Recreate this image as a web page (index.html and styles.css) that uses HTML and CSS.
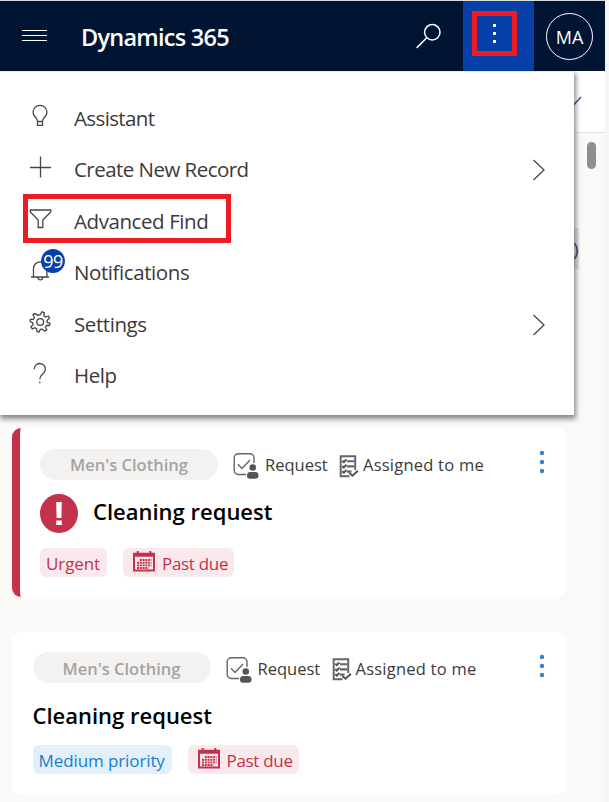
FILE: index.html
```html
<!DOCTYPE html>
<html lang="en">
<head>
<meta charset="utf-8">
<title>Dynamics 365</title>
<link rel="stylesheet" href="styles.css">
</head>
<body>
<svg width="0" height="0" class="defs">
  <symbol id="request" viewBox="0 0 26 26">
    <path d="M13 21.500H5.200A4 4 0 0 1 1.200 17.500V4.700A4 4 0 0 1 5.200.700H17A4 4 0 0 1 21 4.700V10" fill="none" stroke="#666" stroke-width="1.400"/>
    <path d="M5 11.300l4 4.200 8-8.500" fill="none" stroke="#666" stroke-width="1.400"/>
    <circle cx="19.800" cy="14.500" r="3.300" fill="#555"/>
    <rect x="14" y="19" width="11.500" height="6.700" rx="3.300" fill="#555"/>
  </symbol>
  <symbol id="assigned" viewBox="0 0 20 23">
    <path d="M10.500 21.300H1.700V1.200H16.200V15" fill="none" stroke="#666" stroke-width="2"/>
    <path d="M8 6.200h7M8 11.400h7M8 16.600h4.500" stroke="#666" stroke-width="2.100"/>
    <path d="M3.300 5.700l1.500 1.500 2.700-2.700M3.300 11l1.500 1.500 2.700-2.700M3.300 16.200l1.500 1.500 2.700-2.700M10.300 18l3.200 2.700 5.400-5" fill="none" stroke="#555" stroke-width="2"/>
  </symbol>
  <symbol id="calendar" viewBox="0 0 22 21">
    <path d="M1 2.800H21V19.500H1ZM1 4.700H21M4.700 0V5M17.300 0V5" fill="none" stroke="#c4314b" stroke-width="2"/>
    <path d="M6.800 9H18.500M4 11.700H18.500M4 14.400H18.500M4 17H15.500" stroke="#c4314b" stroke-width="1.900" stroke-dasharray="2 .8"/>
  </symbol>
  <symbol id="dots" viewBox="0 0 6 24">
    <g fill="#3b7fc4"><circle cx="3" cy="3" r="2.200"/><circle cx="3" cy="12" r="2.200"/><circle cx="3" cy="21" r="2.200"/></g>
  </symbol>
</svg>
<div class="app">
  <header class="topbar">
    <svg class="burger" width="25" height="12" viewBox="0 0 25 12"><path d="M0 .5H25M0 5.500H25M0 10.500H25" stroke="#fff"/></svg>
    <h1 class="brand">Dynamics 365</h1>
    <svg class="search" width="26" height="26" viewBox="0 0 26 26"><circle cx="16.300" cy="9.300" r="7.700" fill="none" stroke="#fff" stroke-width="1.500"/><path d="M10.800 14.800L.7 24.900" stroke="#fff" stroke-width="1.500"/></svg>
    <button class="more" aria-label="More"><span class="more-frame"><svg width="3" height="19" viewBox="0 0 3 19"><path d="M0 0h3v3h-3zM0 8h3v3h-3zM0 16h3v3h-3z" fill="#fff"/></svg></span></button>
    <div class="account"><span class="avatar">MA</span></div>
  </header>
  <div class="subbar"><svg width="13" height="10" viewBox="0 0 13 10"><path d="M1 4l4 4.500L12 1" fill="none" stroke="#2b5583" stroke-width="1.300"/></svg></div>
  <main class="feed">
    <div class="backdrop">
      <span class="count">)</span>
      <span class="scrollbar"></span>
    </div>
    <article class="card urgent">
      <div class="meta">
        <span class="pill">Men's Clothing</span>
        <svg class="i-request" width="26" height="26"><use href="#request"/></svg><span class="t-request">Request</span>
        <svg class="i-assigned" width="20" height="23"><use href="#assigned"/></svg><span class="t-assigned">Assigned to me</span>
        <svg class="i-dots" width="6" height="24"><use href="#dots"/></svg>
      </div>
      <div class="title">
        <svg width="38" height="39" viewBox="0 0 38 39"><ellipse cx="19" cy="19.500" rx="19" ry="19.500" fill="#c4314b"/><path d="M16.200 8h5.600l-.4 16h-4.800zM16.200 26.500h5.600V31h-5.600z" fill="#fff"/></svg>
        <h2>Cleaning request</h2>
      </div>
      <div class="tags">
        <span class="tag red w-urgent">Urgent</span>
        <span class="tag red w-due"><svg width="22" height="21"><use href="#calendar"/></svg>Past due</span>
      </div>
    </article>
    <article class="card">
      <div class="meta">
        <span class="pill">Men's Clothing</span>
        <svg class="i-request" width="26" height="26"><use href="#request"/></svg><span class="t-request">Request</span>
        <svg class="i-assigned" width="20" height="23"><use href="#assigned"/></svg><span class="t-assigned">Assigned to me</span>
        <svg class="i-dots" width="6" height="24"><use href="#dots"/></svg>
      </div>
      <div class="title"><h2>Cleaning request</h2></div>
      <div class="tags">
        <span class="tag blue">Medium priority</span>
        <span class="tag red w-due"><svg width="22" height="21"><use href="#calendar"/></svg>Past due</span>
      </div>
    </article>
  </main>
  <nav class="menu">
    <a class="item"><svg width="24" height="24" viewBox="0 0 24 24"><path d="M9.500 17.500C9.500 13.500 5 12.500 5 8.300a7 7 0 0 1 14 0c0 4.200-4.500 5.200-4.500 9.200zM9.500 17.500v3.800h5v-3.800"/></svg><span class="m1">Assistant</span></a>
    <a class="item"><svg width="24" height="24" viewBox="0 0 24 24"><path d="M12.500 1.500v21M2 12.500h21"/></svg><span class="m2">Create New Record</span><svg class="chev" width="14" height="22" viewBox="0 0 14 22"><path d="M1.500 1l10.500 10L1.500 21"/></svg></a>
    <a class="item marked"><svg width="24" height="24" viewBox="0 0 24 24"><path d="M2.300 3h20.400v2L14.800 13v7.500h-4.600V13L2.300 5z"/></svg><span class="m3">Advanced Find</span></a>
    <a class="item"><svg width="24" height="24" viewBox="0 0 24 24"><path d="M3 19h18M5.500 19v-8.500a6.700 6.700 0 0 1 13.400 0V19M10 19.500a2.400 2.400 0 0 0 4.800 0"/></svg><b class="badge">99</b><span class="m4">Notifications</span></a>
    <a class="item"><svg width="24" height="24" viewBox="0 0 24 24"><path d="M12.200 4.600L14 1.800L16.300 2.700L15.900 5.700L17.300 7L20.400 6L21.500 8.200L19.200 10.400V12.500L22 13.300L21.500 15.500L18.600 15.500L17.400 17.200L18.800 19.700L16.800 21.200L14.300 19.200L12.200 19.400L11.100 22L8.900 21.500L8.700 18.900L7 17.700L4.300 18.900L2.900 16.800L5 14.800L4.700 12.700L2.100 11.700L2.500 9.300L5.400 9.300L6.400 7.500L5 5L6.900 3.400L9.300 5.200Z"/><circle cx="12.200" cy="12" r="3.400"/></svg><span class="m5">Settings</span><svg class="chev" width="14" height="22" viewBox="0 0 14 22"><path d="M1.500 1l10.500 10L1.500 21"/></svg></a>
    <a class="item"><svg width="24" height="24" viewBox="0 0 24 24"><path d="M6.200 8.200a5.600 5.600 0 1 1 9.900 3.500c-2 2.300-4.300 3-4.300 6.500M11.800 20.800v1.500"/></svg><span class="m6">Help</span></a>
  </nav>
</div>
</body>
</html>
```
FILE: styles.css
```css
*, *::before { box-sizing: border-box; }
body { margin: 0; background: #f6f6f6; font-family: "Open Sans", "Noto Sans", sans-serif; color: #3b3a39; overflow: hidden; }
svg { flex: none; display: block; }
.defs { position: absolute; }
.app { position: relative; width: 605px; height: 802px; overflow: hidden; background: #faf9f8; }

.topbar { display: flex; align-items: center; height: 71px; border-top: 1px solid #d9dde0; background: #001433; color: #fff; }
.burger { margin-left: 22px; margin-bottom: 1px; }
.brand { margin: 2px 0 0 34px; width: 335px; font-size: 23.500px; font-weight: 600; line-height: 32px; letter-spacing: -.75px; white-space: nowrap; }
.more { margin: 0 0 0 21px; padding: 0 8px 6px 0; width: 71px; height: 70px; border: 0; background: #0740a8; display: flex; align-items: center; justify-content: center; }
.more-frame { display: flex; align-items: center; justify-content: center; width: 45px; height: 45px; border: 5px solid #ed1c24; }
.account { flex: 1; display: flex; justify-content: center; }
.avatar { width: 47px; height: 47px; border: 1.300px solid #fff; border-radius: 50%; text-align: center; font-size: 18px; line-height: 47px; }

.subbar { height: 62px; background: #fff; border-bottom: 1px solid #e4e2e0; padding: 25px 23px 0 0; display: flex; justify-content: flex-end; }

.backdrop { display: flex; justify-content: space-between; height: 295px; padding: 9px 9px 0 571px; }
.count { margin-top: 86px; width: 8px; height: 41px; padding-left: 2px; background: #e4e2e0; font-size: 19px; line-height: 42px; color: #2b4a78; overflow: hidden; }
.scrollbar { width: 9px; height: 27px; border-radius: 5px; background: #8f8f8d; }

.card { width: 554px; height: 163px; margin: 0 0 35px 12px; padding: 20px 21px 0 20.500px; background: #fff; border-radius: 9px; }
.card.urgent { height: 169px; padding: 21px 21px 0 20px; border-left: 8px solid #c4314b; }
.meta { display: flex; height: 31px; font-size: 16.500px; line-height: 32px; white-space: nowrap; }
.pill { width: 178px; border-radius: 16px; background: #f3f2f1; color: #a5a3a1; font-weight: 600; text-align: center; }
.i-request { margin: 4px 0 0 15px; }
.t-request { margin-left: 6px; width: 74px; }
.i-assigned { margin-top: 6px; }
.t-assigned { margin-left: 4px; letter-spacing: .23px; }
.i-dots { margin: 1px 0 0 auto; }
.card:not(.urgent) .meta { line-height: 33px; }
.card:not(.urgent) .i-dots { margin-top: 2px; }
.card:not(.urgent) .i-request { margin-top: 5px; }
.title { display: flex; height: 39px; margin-top: 14px; gap: 15px; color: #000; }
.title h2 { margin: 0; font-size: 22px; line-height: 35px; font-weight: 600; white-space: nowrap; }
.card:not(.urgent) .title h2 { line-height: 36px; }
.tags { display: flex; gap: 16px; margin-top: 15px; }
.card:not(.urgent) .tags { margin-top: 9px; }
.tag { display: flex; height: 29px; padding: 0 6px; border-radius: 6px; font-size: 17px; line-height: 31px; letter-spacing: -.1px; white-space: nowrap; }
.red { background: #f9e9ec; color: #c4314b; }
.blue { width: 139px; background: #e3f0fb; color: #1a7ccb; }
.w-urgent { width: 67px; }
.w-due { width: 111px; padding-left: 10px; gap: 7px; letter-spacing: -.3px; }
.w-due svg { margin-top: 3px; }

.menu { position: absolute; top: 71px; left: 0; width: 574px; height: 344px; padding-top: 20px; background: #fff; border-top: 1px solid #e9e9ec; box-shadow: 1px 3px 5px 1px rgba(0,0,0,.45); }
.item { position: relative; display: flex; align-items: center; height: 51.500px; padding: 0 28px 0 28px; font-size: 20.500px; letter-spacing: -.42px; color: #3b3a39; }
.item svg { fill: none; stroke: #484644; stroke-width: 1.300; margin-bottom: 4px; }
.item span { margin-left: 22px; white-space: nowrap; }
.item .m1 { letter-spacing: -.62px; }
.item .m2 { letter-spacing: -.54px; }
.item .chev { margin: 2px 0 0 auto; }
.marked::before { content: ""; position: absolute; left: 23px; top: -1px; width: 208px; height: 49px; border: 5px solid #ed1c24; }
.badge { position: absolute; left: 41px; top: 2px; width: 24px; height: 24px; border-radius: 50%; background: #0740a8; color: #fff; font-size: 18px; font-weight: 400; line-height: 24px; text-align: center; letter-spacing: -.5px; }
```
